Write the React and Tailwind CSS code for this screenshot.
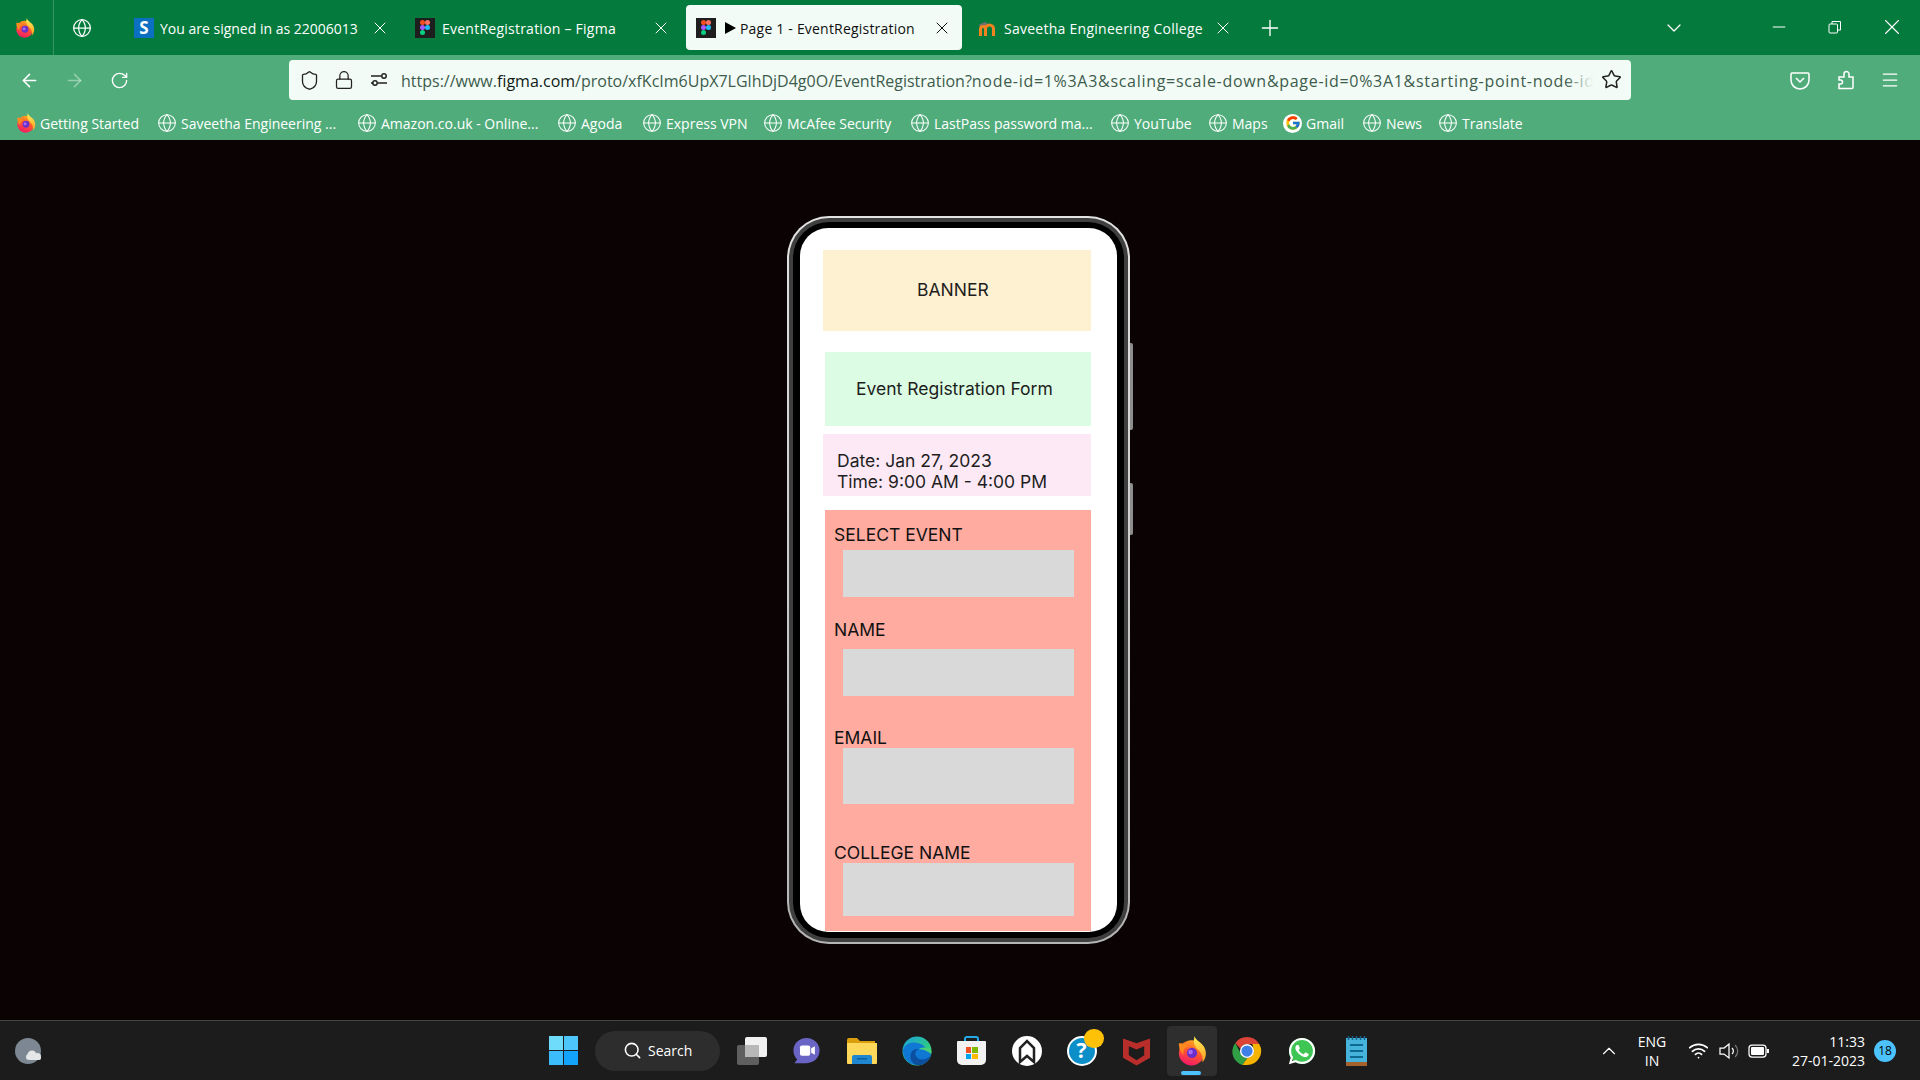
import React from 'react';
import { ArrowLeft, ArrowRight, ChevronDown, ChevronUp, Globe, Lock, Menu, Minus, Plus, RotateCw, Search, Shield, Star, Wifi, X } from 'lucide-react';
import { FaWhatsapp } from 'react-icons/fa';
import { FcGoogle } from 'react-icons/fc';

function FirefoxIcon({ className, id = 'ff' }) {
  return (
    <svg viewBox="0 0 32 32" className={className}>
      <defs>
        <linearGradient id={`${id}Body`} x1="0.7" y1="0" x2="0.3" y2="1">
          <stop offset="0" stopColor="#ffb21e" />
          <stop offset="0.45" stopColor="#ff5a2c" />
          <stop offset="1" stopColor="#f5156c" />
        </linearGradient>
        <linearGradient id={`${id}Flame`} x1="0.5" y1="0" x2="0.5" y2="1">
          <stop offset="0" stopColor="#fff25a" />
          <stop offset="1" stopColor="#ff9a1f" />
        </linearGradient>
      </defs>
      <circle cx="15.500" cy="18" r="13.500" fill={`url(#${id}Body)`} />
      <path d="M19 0c0 5 9 7 11 14 2 6 0 11-3 14 1-6-1-11-5-14-4-3-5-9-3-14z" fill={`url(#${id}Flame)`} />
      <path d="M2 8c3-1 8 0 10 3-3 1-6 4-5 9-3-2-5-7-5-12z" fill="#ff8a1f" />
      <circle cx="16" cy="18" r="5.500" fill="#6b2fc9" />
      <circle cx="14.500" cy="17" r="2.400" fill="#a86bf0" />
    </svg>
  );
}

function FigmaIcon() {
  return (
    <span className="flex h-5 w-5 shrink-0 items-center justify-center bg-[#1e1e1e]">
      <svg viewBox="0 0 12 18" className="h-[15px] w-[10px]">
        <rect x="0" y="0" width="6" height="6" rx="3" fill="#f24e1e" />
        <rect x="6" y="0" width="6" height="6" rx="3" fill="#ff7262" />
        <rect x="0" y="6" width="6" height="6" rx="3" fill="#a259ff" />
        <circle cx="9" cy="9" r="3" fill="#1abcfe" />
        <rect x="0" y="12" width="6" height="6" rx="3" fill="#0acf83" />
      </svg>
    </span>
  );
}

function SophosIcon() {
  return <span className="flex h-5 w-5 shrink-0 items-center justify-center bg-[#0b6fc2] text-[17px] font-bold leading-none text-white">S</span>;
}

function MoodleIcon() {
  return (
    <svg viewBox="0 0 20 20" className="h-5 w-5 shrink-0">
      <path d="M1 7l7-3 5 3-6 2z" fill="#6f6f6f" />
      <path d="M3.500 18v-7a2.500 2.500 0 0 1 5 0v7M8.500 11a4 4 0 0 1 8 0v7" fill="none" stroke="#f58220" strokeWidth="3" />
    </svg>
  );
}

function SliderIcon() {
  return (
    <svg viewBox="0 0 20 20" fill="none" stroke="#222" strokeWidth="1.500" className="h-5 w-5">
      <path d="M2 6h10M2 13h2M9 13h9" />
      <circle cx="15" cy="6" r="2.200" />
      <circle cx="6" cy="13" r="2.200" />
    </svg>
  );
}

function RestoreIcon() {
  return (
    <svg viewBox="0 0 14 14" fill="none" stroke="white" strokeWidth="1" className="h-[14px] w-[14px]">
      <rect x="1" y="4" width="8.500" height="9" rx="1" />
      <path d="M4 4V1.500h8.500V10H9.500" />
    </svg>
  );
}

function PocketIcon() {
  return (
    <svg viewBox="0 0 20 20" fill="none" stroke="white" strokeWidth="1.500" className="h-5 w-5">
      <path d="M2 3h16a1 1 0 0 1 1 1v6a9 9 0 0 1-18 0V4a1 1 0 0 1 1-1z" />
      <path d="M6 8l4 4 4-4" />
    </svg>
  );
}

function PuzzleIcon() {
  return (
    <svg viewBox="0 0 20 20" fill="none" stroke="white" strokeWidth="1.500" className="h-5 w-5">
      <path d="M3 18.500V14h1.500a2 2 0 0 0 0-4H3V7h5V4a2.500 2.500 0 0 1 5 0v3h4v10.500a1 1 0 0 1-1 1z" />
    </svg>
  );
}

function WindowsLogo() {
  return (
    <span className="grid h-[29px] w-[29px] shrink-0 grid-cols-2 gap-[1px]">
      <span className="bg-[#6fdcfc]" />
      <span className="bg-[#4cc6fb]" />
      <span className="bg-[#3cbcfb]" />
      <span className="bg-[#14a3fb]" />
    </span>
  );
}

function WeatherIcon() {
  return (
    <svg viewBox="0 0 28 26" className="h-[26px] w-[28px] shrink-0">
      <circle cx="13" cy="13" r="13" fill="#7d8793" />
      <circle cx="17" cy="17" r="4.500" fill="#e4e6e8" />
      <circle cx="22.500" cy="18.500" r="3.500" fill="#e4e6e8" />
      <circle cx="14" cy="19" r="3" fill="#e4e6e8" />
      <rect x="14" y="18" width="12" height="4" rx="2" fill="#e4e6e8" />
    </svg>
  );
}

function TaskViewIcon() {
  return (
    <span className="relative block h-[28px] w-[30px]">
      <span className="absolute bottom-0 left-0 h-[20px] w-[22px] rounded-[2px] bg-[#5f5f5f]" />
      <span className="absolute right-0 top-0 h-[20px] w-[22px] rounded-[2px] bg-[#f1f1f1]" />
      <span className="absolute left-[8px] top-[8px] h-[12px] w-[14px] bg-[#b8b8b8]" />
    </span>
  );
}

function MeetIcon() {
  return (
    <svg viewBox="0 0 30 30" className="h-[28px] w-[29px]">
      <path d="M15 1c8 0 14 6 14 13.500S23 28 15 28H2l3-4C2 21 1 18 1 14.500 1 7 7 1 15 1z" fill="#6a64c4" />
      <rect x="8" y="9" width="11" height="11" rx="2" fill="#fff" />
      <path d="M20 12l4-2v9l-4-2z" fill="#fff" />
    </svg>
  );
}

function FolderIcon() {
  return (
    <svg viewBox="0 0 30 26" className="h-[26px] w-[30px]">
      <path d="M0 2a2 2 0 0 1 2-2h8l3 3h15v6H0z" fill="#d99f0c" />
      <path d="M0 5h30v20a1 1 0 0 1-1 1H1a1 1 0 0 1-1-1z" fill="#fdd85a" />
      <path d="M5 26v-7a2 2 0 0 1 2-2h16a2 2 0 0 1 2 2v7z" fill="#1f86d0" />
      <rect x="10" y="20" width="10" height="1.500" fill="#0f5fa0" />
    </svg>
  );
}

function EdgeIcon() {
  return (
    <svg viewBox="0 0 32 32" className="h-[30px] w-[30px]">
      <defs>
        <linearGradient id="edgeTop" x1="0" y1="0" x2="1" y2="1">
          <stop offset="0" stopColor="#1aa0dc" />
          <stop offset="0.6" stopColor="#2ec98a" />
          <stop offset="1" stopColor="#6bdb5f" />
        </linearGradient>
      </defs>
      <circle cx="16" cy="16" r="15.500" fill="url(#edgeTop)" />
      <path d="M1 15c2-6 7-8 12-8 7 0 12 4 18 12-1 7-8 12-15 12C7 31 1 24 1 15z" fill="#0f78d4" />
      <path d="M31 20c-3 5-11 7-15 3-3-3-2-8 2-9-5-1-9 2-9 8 0 4 3 8 7 9 7 1 13-4 15-11z" fill="#0c4f9e" />
      <path d="M18 14c5 0 9 2 13 5 1-2 0-4-1-6-5-1-9-1-12 1z" fill="#45d07a" />
    </svg>
  );
}

function StoreIcon() {
  return (
    <span className="relative block h-[29px] w-[29px]">
      <span className="absolute left-[7px] top-0 h-[8px] w-[15px] rounded-t-[3px] border-2 border-b-0 border-[#25a9e6]" />
      <span className="absolute bottom-0 left-0 flex h-[24px] w-[29px] items-center justify-center rounded-b-[5px] rounded-t-[1px] bg-[#f2f2f2]">
        <span className="grid h-[12px] w-[12px] grid-cols-2 gap-[1px]">
          <span className="bg-[#f25022]" />
          <span className="bg-[#7fba00]" />
          <span className="bg-[#00a4ef]" />
          <span className="bg-[#ffb900]" />
        </span>
      </span>
    </span>
  );
}

function ArrowBadgeIcon() {
  return (
    <svg viewBox="0 0 30 30" className="h-[30px] w-[30px]">
      <circle cx="15" cy="15" r="15" fill="#fff" />
      <path d="M8 26V12l7-7 7 7v14l-7-6z" fill="none" stroke="#222" strokeWidth="2.500" />
    </svg>
  );
}

function HelpIcon() {
  return (
    <span className="relative block h-[30px] w-[30px]">
      <span className="flex h-[30px] w-[30px] items-center justify-center rounded-full border-2 border-white bg-[#0c8fc9] text-[21px] font-bold leading-none text-white">?</span>
      <span className="absolute right-[-7px] top-[-7px] h-[19px] w-[20px] rounded-full bg-[#ffc107]" />
    </span>
  );
}

function McAfeeIcon() {
  return (
    <svg viewBox="0 0 28 30" className="h-[30px] w-[27px]">
      <path d="M0 2l14 5 14-5v20l-14 8-14-8z" fill="#b92e2b" />
      <path d="M6 10l8 3.500 8-3.500v9.500l-8 5-8-5z" fill="#1c1c1c" />
    </svg>
  );
}

function ChromeIcon() {
  return (
    <svg viewBox="0 0 32 32" className="h-[30px] w-[30px]">
      <path d="M16 1a15 15 0 0 1 13 7.500H16a7.500 7.500 0 0 0-7 5L3.500 7.500A15 15 0 0 1 16 1z" fill="#db4437" />
      <path d="M3.500 7.500L9.500 19a7.500 7.500 0 0 0 7 4.500L11 31a15 15 0 0 1-7.500-23.500z" fill="#2f9e44" />
      <path d="M29 8.500a15 15 0 0 1-13 22.500h-5l5.500-7.500a7.500 7.500 0 0 0 6-10.500 7 7 0 0 0-1-4.500z" fill="#f4b400" />
      <circle cx="16" cy="16" r="7.500" fill="#fff" />
      <circle cx="16" cy="16" r="6" fill="#3f7fe8" />
    </svg>
  );
}

function WhatsappIcon() {
  return (
    <span className="relative block h-[30px] w-[30px]">
      <span className="absolute inset-[2px] rounded-full bg-[#3ec554]" />
      <FaWhatsapp className="absolute inset-0 h-[30px] w-[30px] text-white" />
    </span>
  );
}

function NotepadIcon() {
  return (
    <svg viewBox="0 0 21 30" className="h-[30px] w-[21px]">
      <rect x="0" y="2" width="21" height="25" fill="#46b3dc" />
      <rect x="0" y="26" width="21" height="4" fill="#a5622d" />
      <path d="M2.500 0v4M6.500 0v4M10.500 0v4M14.500 0v4M18.500 0v4" stroke="#15628a" strokeWidth="1.500" />
      <path d="M4 9h13M4 15h13M4 21h13" stroke="#0f6a92" strokeWidth="2" />
    </svg>
  );
}

const tabs = [
  { id: 1, title: 'You are signed in as 22006013', icon: <SophosIcon />, tracking: 'ml-[6px]' },
  { id: 2, title: 'EventRegistration – Figma', icon: <FigmaIcon />, tracking: 'ml-[7px] tracking-[0.24px]' },
  { id: 3, title: 'Page 1 - EventRegistration', icon: <FigmaIcon />, active: true, tracking: 'ml-[4px] tracking-[0.2px]' },
  { id: 4, title: 'Saveetha Engineering College', icon: <MoodleIcon />, tracking: 'ml-[7px] tracking-[0.26px]' },
];

const bookmarks = [
  { label: 'Getting Started', width: 'w-[141px]', firefox: true },
  { label: 'Saveetha Engineering ...', width: 'w-[200px]' },
  { label: 'Amazon.co.uk - Online...', width: 'w-[200px]' },
  { label: 'Agoda', width: 'w-[85px]' },
  { label: 'Express VPN', width: 'w-[121px]' },
  { label: 'McAfee Security', width: 'w-[147px]' },
  { label: 'LastPass password ma...', width: 'w-[200px]' },
  { label: 'YouTube', width: 'w-[98px]' },
  { label: 'Maps', width: 'w-[75px]' },
  { label: 'Gmail', width: 'w-[79px]', google: true },
  { label: 'News', width: 'w-[76px]' },
  { label: 'Translate', width: 'w-[90px]' },
];

const taskbarApps = [
  { id: 'taskview', icon: <TaskViewIcon /> },
  { id: 'meet', icon: <MeetIcon /> },
  { id: 'files', icon: <FolderIcon /> },
  { id: 'edge', icon: <EdgeIcon /> },
  { id: 'store', icon: <StoreIcon /> },
  { id: 'arrow', icon: <ArrowBadgeIcon /> },
  { id: 'help', icon: <HelpIcon /> },
  { id: 'mcafee', icon: <McAfeeIcon /> },
  { id: 'firefox', icon: <FirefoxIcon id="ffTask" className="h-[30px] w-[30px]" />, active: true },
  { id: 'chrome', icon: <ChromeIcon /> },
  { id: 'whatsapp', icon: <WhatsappIcon /> },
  { id: 'notepad', icon: <NotepadIcon /> },
];

function TabBar() {
  return (
    <div className="flex h-[55px] items-center bg-[#047a3c] text-white">
      <div className="flex h-full w-[54px] shrink-0 items-center border-r border-white/20 pl-[15px]">
        <FirefoxIcon id="ffTab" className="h-5 w-5" />
      </div>
      <div className="flex w-[70px] shrink-0 pl-[18px]">
        <Globe size={20} strokeWidth={1.5} />
      </div>
      <div className="flex gap-[5px]">
        {tabs.map((tab) => (
          <div key={tab.id} className={`flex h-[45px] w-[276px] items-center rounded-[4px] pl-[10px] pr-[10px] text-[14px] ${tab.active ? 'bg-[#f2fbf6] text-[#111]' : ''}`}>
            {tab.icon}
            {tab.active && <span className="ml-[9px] h-0 w-0 border-y-[6px] border-l-[11px] border-y-transparent border-l-black" />}
            <span className={`flex-1 truncate pt-[1px] ${tab.tracking}`}>{tab.title}</span>
            <X size={20} strokeWidth={1.2} />
          </div>
        ))}
      </div>
      <Plus size={26} strokeWidth={1.25} className="ml-[14px]" />
      <ChevronDown size={24} strokeWidth={1.25} className="ml-auto" />
      <div className="ml-[64px] flex w-[170px] items-center pb-[2px]">
        <div className="flex w-[57px] justify-center"><Minus size={20} strokeWidth={1.2} /></div>
        <div className="flex w-[56px] justify-center"><RestoreIcon /></div>
        <div className="flex w-[57px] justify-center"><X size={26} strokeWidth={1} /></div>
      </div>
    </div>
  );
}

function NavBar() {
  return (
    <div className="flex h-[50px] items-center bg-[#50ad7b] pl-[7px] text-white">
      <div className="flex w-[45px] justify-center"><ArrowLeft size={21} strokeWidth={1.75} /></div>
      <div className="flex w-[45px] justify-center text-white/40"><ArrowRight size={21} strokeWidth={1.75} /></div>
      <div className="flex w-[45px] justify-center"><RotateCw size={19} strokeWidth={1.75} /></div>
      <div className="relative ml-[147px] flex h-[40px] w-[1342px] items-center rounded-[4px] bg-[#f2fbf6] pl-[10px] text-[#222]">
        <Shield size={21} strokeWidth={1.5} />
        <Lock size={20} strokeWidth={1.5} className="ml-[14px]" />
        <span className="ml-[15px]"><SliderIcon /></span>
        <div className="ml-[12px] w-[1192px] overflow-hidden whitespace-nowrap pt-[2px] text-[16px] text-[#3d5c4c]">
          https://www.<span className="text-[#0f1a14]">figma.com</span>/proto/xfKcIm6UpX7LGlhDjD4g0O/EventRegistration?<span className="tracking-[0.7px]">node-id=1%3A3&amp;scaling=scale-down&amp;page-id=0%3A1&amp;starting-point-node-id=1%3A3</span>
        </div>
        <div className="absolute right-[38px] top-0 h-full w-[28px] bg-gradient-to-r from-transparent to-[#f2fbf6]" />
        <Star size={21} strokeWidth={1.75} className="absolute right-[9px] top-[9px]" />
      </div>
      <div className="ml-[159px]"><PocketIcon /></div>
      <span className="ml-[26px]"><PuzzleIcon /></span>
      <Menu size={20} strokeWidth={1.5} className="ml-[24px]" />
    </div>
  );
}

function BookmarksBar() {
  return (
    <div className="flex h-[35px] items-center bg-[#50ad7b] pl-[16px] pt-[1px] text-[14px] text-white">
      {bookmarks.map((b) => (
        <div key={b.label} className={`flex shrink-0 items-center ${b.width}`}>
          {b.firefox && <FirefoxIcon id="ffMark" className="h-5 w-5 shrink-0" />}
          {b.google && (
            <span className="flex h-[19px] w-[19px] shrink-0 items-center justify-center rounded-full bg-white">
              <FcGoogle size={16} />
            </span>
          )}
          {!b.firefox && !b.google && <Globe size={20} strokeWidth={1.25} className="shrink-0" />}
          <span className="ml-[4px] whitespace-nowrap">{b.label}</span>
        </div>
      ))}
    </div>
  );
}

function FormField({ label, labelClass, inputClass }) {
  return (
    <>
      <div className={`pl-[9px] text-[17.5px] leading-[22px] text-[#111] ${labelClass}`}>{label}</div>
      <div className={`ml-[18px] w-[231px] bg-[#d9d9d9] ${inputClass}`} />
    </>
  );
}

function Phone() {
  return (
    <div className="relative h-[728px] w-[343px] rounded-[42px] bg-gradient-to-b from-[#e2e2e2] to-[#b5b5b5] p-[2px]">
      <span className="absolute right-[-3px] top-[127px] h-[87px] w-[3px] rounded-r-[2px] bg-[#8d8d8d]" />
      <span className="absolute right-[-3px] top-[267px] h-[52px] w-[3px] rounded-r-[2px] bg-[#8d8d8d]" />
      <div className="h-full rounded-[40px] bg-[#3f3f3f] p-[4px]">
        <div className="h-full rounded-[36px] bg-black px-[7px] py-[6px]">
          <div className="h-full overflow-hidden rounded-[28px] bg-white pt-[22px] font-[Inter] text-[#1e1e1e]">
            <div className="ml-[23px] flex h-[81px] w-[268px] items-center bg-[#fef1d2] pl-[94px] text-[17.5px]">BANNER</div>
            <div className="ml-[25px] mt-[21px] flex h-[74px] w-[266px] items-center bg-[#dcfce4] pl-[31px] text-[17.5px]">Event Registration Form</div>
            <div className="ml-[23px] mt-[8px] h-[62px] w-[268px] bg-[#fde8f5] pl-[14px] pt-[16px] text-[17.5px] leading-[21px]">
              <div>Date: Jan 27, 2023</div>
              <div>Time: 9:00 AM - 4:00 PM</div>
            </div>
            <div className="ml-[25px] mt-[14px] h-[421px] w-[266px] bg-[#ffaba0] pt-[14px]">
              <FormField label="SELECT EVENT" labelClass="" inputClass="mt-[4px] h-[47px]" />
              <FormField label="NAME" labelClass="mt-[22px]" inputClass="mt-[8px] h-[47px]" />
              <FormField label="EMAIL" labelClass="mt-[31px]" inputClass="mt-[-1px] h-[56px]" />
              <FormField label="COLLEGE NAME" labelClass="mt-[38px]" inputClass="mt-[-1px] h-[53px]" />
            </div>
          </div>
        </div>
      </div>
    </div>
  );
}

function Taskbar() {
  return (
    <div className="flex h-[60px] items-center border-t border-[#454545] bg-[#1c1c1c] pl-[15px] text-white">
      <WeatherIcon />
      <div className="ml-[506px]"><WindowsLogo /></div>
      <div className="ml-[17px] flex h-[40px] w-[125px] items-center rounded-full bg-[#2d2d2d] pl-[28px] text-[14px]">
        <Search size={19} strokeWidth={2} />
        <span className="ml-[6px]">Search</span>
      </div>
      <div className="ml-[4px] flex items-center">
        {taskbarApps.map((app) => (
          <div key={app.id} className="relative flex h-[50px] w-[55px] items-center justify-center">
            {app.active && <span className="absolute inset-y-0 left-[3px] right-[2px] rounded-[4px] bg-[#2e2e2e]" />}
            {app.active && <span className="absolute bottom-[1px] left-[17px] h-[4px] w-[20px] rounded-full bg-[#4cc2ff]" />}
            <span className="relative">{app.icon}</span>
          </div>
        ))}
      </div>
      <div className="ml-auto flex items-center text-[14px] leading-[19px]">
        <ChevronUp size={22} strokeWidth={1.25} />
        <div className="ml-[10px] w-[44px] text-center">
          <div>ENG</div>
          <div>IN</div>
        </div>
        <Wifi size={21} strokeWidth={2} className="ml-[14px]" />
        <svg viewBox="0 0 22 20" fill="none" stroke="white" strokeWidth="1.25" className="ml-[9px] h-5 w-[22px]">
          <path d="M2 7h4l5-4v14l-5-4H2z" />
          <path d="M14 7a4 4 0 0 1 0 6" />
          <path d="M17 4a8 8 0 0 1 0 12" stroke="#777" />
        </svg>
        <svg viewBox="0 0 22 14" className="ml-[8px] h-[14px] w-[22px]">
          <rect x="1" y="1" width="17" height="12" rx="3" fill="none" stroke="white" strokeWidth="1.25" />
          <rect x="3" y="3" width="13" height="8" rx="1" fill="white" />
          <rect x="19" y="5" width="2" height="4" fill="white" />
        </svg>
        <div className="ml-[9px] w-[86px] text-right">
          <div>11:33</div>
          <div className="whitespace-nowrap">27-01-2023</div>
        </div>
      </div>
      <span className="ml-[9px] mr-[24px] flex h-[22px] w-[22px] items-center justify-center rounded-full bg-[#4cc2ff] text-[12px] text-black">18</span>
    </div>
  );
}

export default function App() {
  return (
    <div className="flex h-[1080px] w-[1920px] flex-col overflow-hidden bg-[#0b0303] font-['Open_Sans',sans-serif]">
      <TabBar />
      <NavBar />
      <BookmarksBar />
      <main className="flex flex-1 justify-center pr-[3px] pt-[76px]">
        <Phone />
      </main>
      <Taskbar />
    </div>
  );
}
